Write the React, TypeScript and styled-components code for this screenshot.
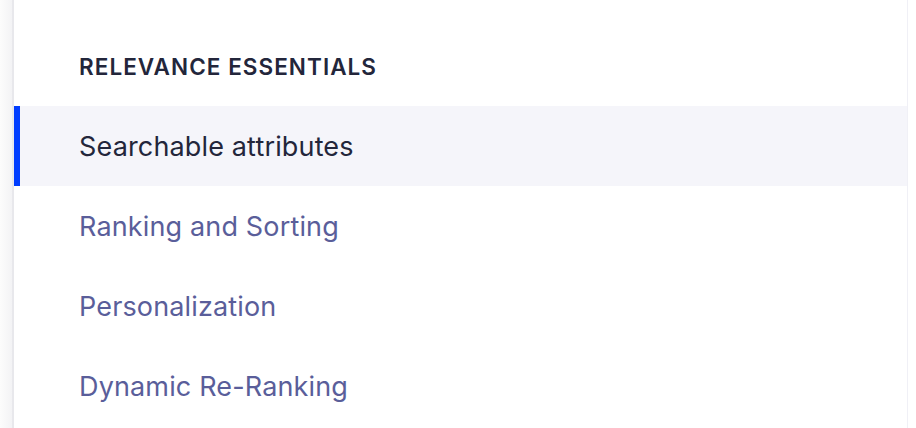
import React, { FC } from 'react'
import styled, { createGlobalStyle } from 'styled-components'

const GlobalStyle = createGlobalStyle`
  html, body {
    margin: 0;
    padding: 0;
    background: #ffffff;
  }
  body {
    font-family: Inter, "Noto Sans", sans-serif;
    -webkit-font-smoothing: antialiased;
  }
`

const Page = styled.div`
  display: flex;
  height: 428px;
  overflow: hidden;
`

const Gutter = styled.div`
  width: 12px;
  background: linear-gradient(to right, #fcfcfc, #f3f3f5);
  border-right: 2px solid #e8e8ec;
`

const Sidebar = styled.nav`
  width: 893px;
  border-right: 1px solid #f0f0f6;
  background: #fff;
  padding-top: 48px;
`

const Heading = styled.h3`
  margin: 0;
  padding-left: 65px;
  height: 58px;
  line-height: 38px;
  font-size: 22.5px;
  font-weight: 600;
  letter-spacing: 1.05px;
  color: #23263b;
`

const Item = styled.a<{ $active?: boolean }>`
  display: flex;
  align-items: center;
  height: 80px;
  box-sizing: border-box;
  border-left: 6px solid ${(p) => (p.$active ? '#003dff' : 'transparent')};
  padding-left: 59px;
  background: ${(p) => (p.$active ? '#f5f5fa' : 'transparent')};
  color: ${(p) => (p.$active ? '#23263b' : '#5a5e9a')};
  font-size: 27px;
  letter-spacing: 0.15px;
  text-decoration: none;
  cursor: pointer;
`

const items = [
  'Searchable attributes',
  'Ranking and Sorting',
  'Personalization',
  'Dynamic Re-Ranking',
]

const App: FC = () => (
  <Page>
    <GlobalStyle />
    <Gutter />
    <Sidebar>
      <Heading>RELEVANCE ESSENTIALS</Heading>
      {items.map((label, i) => (
        <Item key={label} $active={i === 0}>
          {label}
        </Item>
      ))}
    </Sidebar>
  </Page>
)

export default App
